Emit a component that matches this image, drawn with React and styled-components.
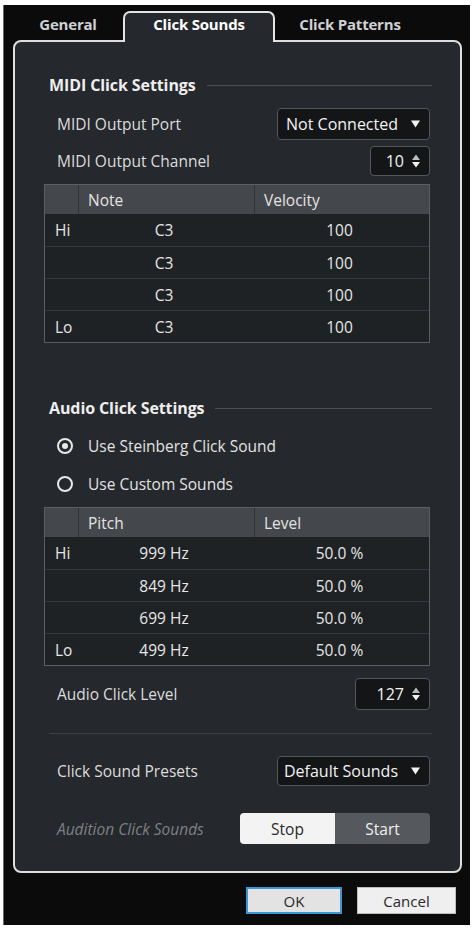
import React from "react";
import styled, { createGlobalStyle } from "styled-components";

const GlobalStyle = createGlobalStyle`
  body {
    margin: 0;
    background: #ffffff;
    font-family: "Open Sans", "Noto Sans", sans-serif;
  }
`;

const Dialog = styled.div`
  margin: 5px 3px 4px 3px;
  height: 920px;
  box-sizing: border-box;
  background: #0b0b0c;
  border-left: 1px solid #6a6a6a;
  padding: 6px 8px 0 9px;
  display: flex;
  flex-direction: column;
`;

const TabBar = styled.div`
  display: flex;
  height: 29px;
  position: relative;
  z-index: 1;
`;

const Tab = styled.div`
  width: ${(p) => p.width}px;
  box-sizing: border-box;
  display: flex;
  align-items: center;
  justify-content: center;
  font-size: 15px;
  font-weight: 700;
  letter-spacing: -0.2px;
  color: ${(p) => (p.active ? "#ffffff" : "#cfd1d3")};
  background: ${(p) => (p.active ? "#25282c" : "transparent")};
  border: ${(p) => (p.active ? "2px solid #e4e4e4" : "2px solid transparent")};
  border-bottom: none;
  border-radius: 7px 7px 0 0;
  margin-bottom: ${(p) => (p.active ? "-2px" : "0")};
  padding-bottom: ${(p) => (p.active ? "8px" : "6px")};
`;

const Panel = styled.div`
  height: 833px;
  box-sizing: border-box;
  background: #25282c;
  border: 2px solid #dedede;
  border-radius: 8px;
  padding: 0 30px 0 29px;
  display: flex;
  flex-direction: column;
  color: #dcdcdc;
  font-size: 15.5px;
`;

const Heading = styled.div`
  display: flex;
  align-items: center;
  gap: 11px;
  margin: ${(p) => p.top}px 0 0 5px;
  height: 18px;
  font-weight: 700;
  font-size: 16px;
  color: #eeeeee;
  letter-spacing: -0.1px;

  &::after {
    content: "";
    flex: 1;
    height: 1px;
    background: #4a4d51;
    margin-right: -2px;
  }
`;

const Row = styled.div`
  display: flex;
  align-items: center;
  justify-content: space-between;
  margin-top: ${(p) => p.top}px;
  padding-left: 13px;
  color: ${(p) => (p.muted ? "#7d8084" : "#dcdcdc")};
  font-style: ${(p) => (p.muted ? "italic" : "normal")};
`;

const Field = styled.div`
  box-sizing: border-box;
  width: ${(p) => p.width}px;
  height: ${(p) => p.height}px;
  background: #131517;
  border: 1px solid #54575b;
  border-radius: 4px;
  display: flex;
  align-items: center;
  justify-content: flex-end;
  gap: ${(p) => (p.spin ? 8 : 13)}px;
  padding-right: 9px;
  color: #f2f2f2;
  font-size: 16px;
`;

const Table = styled.div`
  margin-top: ${(p) => p.top}px;
  border: 1px solid #5b5e62;
  background: #1f2225;
  display: grid;
  grid-template-columns: 33px 176px 1fr;
`;

const HeadCell = styled.div`
  height: 29px;
  background: #44474b;
  display: flex;
  align-items: center;
  padding-left: 9px;
  color: #e4e4e4;
  border-left: ${(p) => (p.first ? "none" : "1px solid #303336")};
`;

const Cell = styled.div`
  height: 32px;
  box-sizing: border-box;
  border-top: ${(p) => (p.firstRow ? "none" : "1px solid #34373b")};
  display: flex;
  align-items: center;
  justify-content: ${(p) => (p.label ? "flex-start" : "center")};
  padding-left: ${(p) => (p.label ? "10px" : "0")};
  padding-right: ${(p) => (p.label ? "0" : "4px")};
  color: #e6e6e6;
`;

const RadioRow = styled.label`
  display: flex;
  align-items: center;
  gap: 15px;
  height: 20px;
  margin-top: ${(p) => p.top}px;
  padding-left: 13px;
  color: #e2e2e2;
`;

const RadioCircle = styled.span`
  width: 16px;
  height: 16px;
  box-sizing: border-box;
  border: 2px solid #e8e8e8;
  border-radius: 50%;
  display: flex;
  align-items: center;
  justify-content: center;

  &::after {
    content: "";
    width: 6px;
    height: 6px;
    border-radius: 50%;
    background: ${(p) => (p.checked ? "#e8e8e8" : "transparent")};
  }
`;

const Divider = styled.div`
  height: 1px;
  background: #3c3f43;
  margin: 23px -2px 0 5px;
`;

const Segmented = styled.div`
  display: flex;
  width: 190px;
  height: 31px;
  border-radius: 4px;
  overflow: hidden;
`;

const Segment = styled.div`
  flex: 1;
  display: flex;
  align-items: center;
  justify-content: center;
  font-style: normal;
  background: ${(p) => (p.on ? "#f3f3f3" : "#55585c")};
  color: ${(p) => (p.on ? "#2a2a2a" : "#f0f0f0")};
`;

const Footer = styled.div`
  display: flex;
  justify-content: flex-end;
  gap: 15px;
  margin-top: 14px;
  padding-right: 6px;
`;

const Button = styled.div`
  box-sizing: border-box;
  width: ${(p) => p.width}px;
  height: 27px;
  display: flex;
  align-items: center;
  justify-content: center;
  font-size: 15px;
  color: #2a2a2a;
  background: ${(p) => (p.primary ? "#e3e3e3" : "#efefef")};
  border: ${(p) => (p.primary ? "2px solid #3a97d6" : "1px solid #bdbdbd")};
`;

const Caret = () => (
  <svg width="9" height="8" viewBox="0 0 9 8">
    <path d="M0 0.5 H9 L4.5 7.5 Z" fill="#f2f2f2" />
  </svg>
);

const Stepper = () => (
  <svg width="8" height="14" viewBox="0 0 8 14">
    <path d="M0 6 L4 0.5 L8 6 Z" fill="#b9bcbf" />
    <path d="M0 8 L8 8 L4 13.5 Z" fill="#f2f2f2" />
  </svg>
);

const midiRows = [
  ["Hi", "C3", "100"],
  ["", "C3", "100"],
  ["", "C3", "100"],
  ["Lo", "C3", "100"],
];

const audioRows = [
  ["Hi", "999 Hz", "50.0 %"],
  ["", "849 Hz", "50.0 %"],
  ["", "699 Hz", "50.0 %"],
  ["Lo", "499 Hz", "50.0 %"],
];

const ClickTable = ({ top, cols, rows }) => (
  <Table top={top}>
    <HeadCell first />
    <HeadCell>{cols[0]}</HeadCell>
    <HeadCell>{cols[1]}</HeadCell>
    {rows.map((r, i) => (
      <React.Fragment key={i}>
        <Cell label firstRow={i === 0}>{r[0]}</Cell>
        <Cell firstRow={i === 0}>{r[1]}</Cell>
        <Cell firstRow={i === 0}>{r[2]}</Cell>
      </React.Fragment>
    ))}
  </Table>
);

const App = () => {
  return (
    <>
      <GlobalStyle />
      <Dialog>
        <TabBar>
          <Tab width={110}>General</Tab>
          <Tab width={152} active>
            Click Sounds
          </Tab>
          <Tab width={150}>Click Patterns</Tab>
        </TabBar>
        <Panel>
          <Heading top={34}>MIDI Click Settings</Heading>
          <Row top={14}>
            <span>MIDI Output Port</span>
            <Field width={153} height={32}>
              Not Connected <Caret />
            </Field>
          </Row>
          <Row top={6}>
            <span>MIDI Output Channel</span>
            <Field width={60} height={30} spin>
              10 <Stepper />
            </Field>
          </Row>
          <ClickTable top={8} cols={["Note", "Velocity"]} rows={midiRows} />

          <Heading top={56}>Audio Click Settings</Heading>
          <RadioRow top={19}>
            <RadioCircle checked />
            Use Steinberg Click Sound
          </RadioRow>
          <RadioRow top={18}>
            <RadioCircle />
            Use Custom Sounds
          </RadioRow>
          <ClickTable top={13} cols={["Pitch", "Level"]} rows={audioRows} />

          <Row top={12}>
            <span>Audio Click Level</span>
            <Field width={75} height={32} spin>
              127 <Stepper />
            </Field>
          </Row>
          <Divider />
          <Row top={22}>
            <span>Click Sound Presets</span>
            <Field width={153} height={30}>
              Default Sounds <Caret />
            </Field>
          </Row>
          <Row top={27} muted>
            <span>Audition Click Sounds</span>
            <Segmented>
              <Segment on>Stop</Segment>
              <Segment>Start</Segment>
            </Segmented>
          </Row>
        </Panel>
        <Footer>
          <Button width={96} primary>
            OK
          </Button>
          <Button width={99}>Cancel</Button>
        </Footer>
      </Dialog>
    </>
  );
};

export default App;
